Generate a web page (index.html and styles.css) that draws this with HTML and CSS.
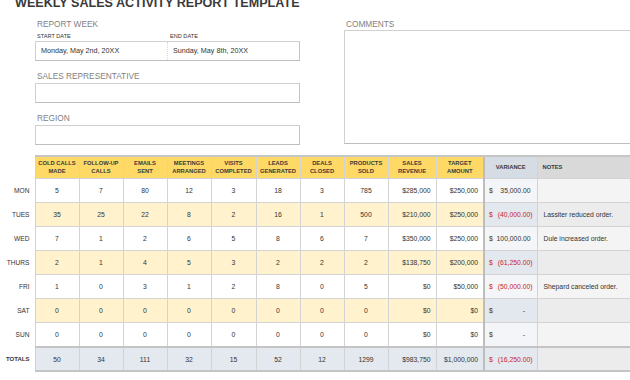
FILE: index.html
```html
<!DOCTYPE html>
<html>
<head>
<meta charset="utf-8">
<link rel="stylesheet" href="styles.css">
</head>
<body>
<h1 class="title">WEEKLY SALES ACTIVITY REPORT TEMPLATE</h1>
<div class="top">
  <div class="left">
    <div class="label">REPORT WEEK</div>
    <div class="sublabels"><span class="sub">START DATE</span><span class="sub">END DATE</span></div>
    <div class="box dates">
      <div class="dcell">Monday, May 2nd, 20XX</div>
      <div class="dcell second">Sunday, May 8th, 20XX</div>
    </div>
    <div class="label spaced">SALES REPRESENTATIVE</div>
    <div class="box"></div>
    <div class="label spaced">REGION</div>
    <div class="box"></div>
  </div>
  <div class="right">
    <div class="label">COMMENTS</div>
    <div class="box comments"></div>
  </div>
</div>
<table class="grid">
  <colgroup>
    <col class="c-day"><col class="c-n"><col class="c-n"><col class="c-n"><col class="c-n"><col class="c-n5"><col class="c-n"><col class="c-n"><col class="c-n"><col class="c-m"><col class="c-m"><col class="c-var"><col class="c-notes">
  </colgroup>
  <thead>
    <tr>
      <th class="day"></th>
      <th class="hy">COLD CALLS<br>MADE</th>
      <th class="hy">FOLLOW-UP<br>CALLS</th>
      <th class="hy">EMAILS<br>SENT</th>
      <th class="hy">MEETINGS<br>ARRANGED</th>
      <th class="hy">VISITS<br>COMPLETED</th>
      <th class="hy">LEADS<br>GENERATED</th>
      <th class="hy">DEALS<br>CLOSED</th>
      <th class="hy">PRODUCTS<br>SOLD</th>
      <th class="hy">SALES<br>REVENUE</th>
      <th class="hy">TARGET<br>AMOUNT</th>
      <th class="hv">VARIANCE</th>
      <th class="hn">NOTES</th>
    </tr>
  </thead>
  <tbody>
    <tr class="odd">
      <td class="day">MON</td><td>5</td><td>7</td><td>80</td><td>12</td><td>3</td><td>18</td><td>3</td><td>785</td><td class="money">$285,000</td><td class="money">$250,000</td>
      <td class="var"><span class="cur">$</span><span class="amt">35,000.00&nbsp;</span></td><td class="note"></td>
    </tr>
    <tr class="even">
      <td class="day">TUES</td><td>35</td><td>25</td><td>22</td><td>8</td><td>2</td><td>16</td><td>1</td><td>500</td><td class="money">$210,000</td><td class="money">$250,000</td>
      <td class="var neg"><span class="cur">$</span><span class="amt">(40,000.00)</span></td><td class="note">Lassiter reduced order.</td>
    </tr>
    <tr class="odd">
      <td class="day">WED</td><td>7</td><td>1</td><td>2</td><td>6</td><td>5</td><td>8</td><td>6</td><td>7</td><td class="money">$350,000</td><td class="money">$250,000</td>
      <td class="var"><span class="cur">$</span><span class="amt">100,000.00&nbsp;</span></td><td class="note">Dule increased order.</td>
    </tr>
    <tr class="even">
      <td class="day">THURS</td><td>2</td><td>1</td><td>4</td><td>5</td><td>3</td><td>2</td><td>2</td><td>2</td><td class="money">$138,750</td><td class="money">$200,000</td>
      <td class="var neg"><span class="cur">$</span><span class="amt">(61,250.00)</span></td><td class="note"></td>
    </tr>
    <tr class="odd">
      <td class="day">FRI</td><td>1</td><td>0</td><td>3</td><td>1</td><td>2</td><td>8</td><td>0</td><td>5</td><td class="money">$0</td><td class="money">$50,000</td>
      <td class="var neg"><span class="cur">$</span><span class="amt">(50,000.00)</span></td><td class="note">Shepard canceled order.</td>
    </tr>
    <tr class="even">
      <td class="day">SAT</td><td>0</td><td>0</td><td>0</td><td>0</td><td>0</td><td>0</td><td>0</td><td>0</td><td class="money">$0</td><td class="money">$0</td>
      <td class="var"><span class="cur">$</span><span class="amt">-&nbsp;&nbsp;&nbsp;&nbsp;</span></td><td class="note"></td>
    </tr>
    <tr class="odd">
      <td class="day">SUN</td><td>0</td><td>0</td><td>0</td><td>0</td><td>0</td><td>0</td><td>0</td><td>0</td><td class="money">$0</td><td class="money">$0</td>
      <td class="var"><span class="cur">$</span><span class="amt">-&nbsp;&nbsp;&nbsp;&nbsp;</span></td><td class="note"></td>
    </tr>
    <tr class="totals">
      <td class="day">TOTALS</td><td>50</td><td>34</td><td>111</td><td>32</td><td>15</td><td>52</td><td>12</td><td>1299</td><td class="money">$983,750</td><td class="money">$1,000,000</td>
      <td class="var neg"><span class="cur">$</span><span class="amt">(16,250.00)</span></td><td class="note"></td>
    </tr>
  </tbody>
</table>
</body>
</html>
```

FILE: styles.css
```css
html, body {
  margin: 0;
  padding: 0;
  background: #ffffff;
  overflow: hidden;
}
body {
  width: 630px;
  height: 380px;
  font-family: "Liberation Sans", Arial, sans-serif;
  color: #333333;
}
.title {
  margin: -4px 0 0 15px;
  font-size: 12.6px;
  line-height: 14px;
  font-weight: bold;
  color: #3a3a3a;
  white-space: nowrap;
}
.top {
  display: flex;
  gap: 44px;
  padding: 9px 0 0 35px;
}
.left {
  width: 265px;
  flex: none;
  display: flex;
  flex-direction: column;
}
.right {
  width: 300px;
  flex: none;
  display: flex;
  flex-direction: column;
}
.label {
  font-size: 8.3px;
  line-height: 11px;
  color: #7f7f7f;
  padding-left: 2px;
  white-space: nowrap;
}
.label.spaced {
  margin-top: 10px;
  margin-bottom: 1px;
}
.sublabels {
  display: flex;
  height: 11px;
  align-items: center;
}
.sub {
  font-size: 5.6px;
  line-height: 8px;
  color: #333;
  padding-left: 2px;
}
.sub:first-child {
  width: 131px;
}
.box {
  height: 18px;
  border: 1px solid #d0d0d0;
  border-bottom-color: #bdbdbd;
  border-right-color: #c4c4c4;
  background: #fff;
}
.dates {
  display: flex;
}
.dcell {
  width: 131px;
  font-size: 7.2px;
  line-height: 18px;
  padding-left: 5px;
  color: #333;
  box-sizing: border-box;
}
.dcell.second {
  flex: 1;
  border-left: 1px dotted #d8d8d8;
}
.comments {
  height: 112px;
  border-right: none;
}

/* table */
.grid {
  margin-top: 10px;
  border-collapse: collapse;
  table-layout: fixed;
  width: 637px;
  font-size: 6.8px;
  color: #333;
}
.c-day { width: 35px; }
.c-n { width: 44px; }
.c-n5 { width: 45px; }
.c-m { width: 48px; }
.c-var { width: 53px; }
.c-notes { width: 100px; }

.grid th, .grid td {
  border: 1px solid #d3d3d3;
  padding: 0;
  text-align: center;
  overflow: hidden;
  white-space: nowrap;
}
.grid th {
  height: 21px;
  font-size: 5.8px;
  line-height: 7.5px;
  font-weight: bold;
  color: #3a3a3a;
  border-top: 2px solid #c6c6c6;
}
.grid td {
  height: 23px;
}
.grid .day {
  border: none;
  background: transparent;
  text-align: right;
  padding-right: 5px;
  font-size: 6.6px;
}
.grid th.day { border-top: none; }
.hy { background: #ffd966; }
.hv {
  background: #d6dce4;
  border-left: 2px solid #bdbdbd !important;
}
.grid th.hn {
  background: #d9d9d9;
  text-align: left;
  padding-left: 5px;
}
.odd td { background: #ffffff; }
.even td { background: #fff2cc; }
.grid td.day { background: transparent; }
.grid td.money {
  text-align: right;
  padding-right: 5px;
}
.grid td.var {
  border-left: 2px solid #bdbdbd;
  padding: 0 4px 0 4px;
}
.odd td.var { background: #f4f5f8; }
.even td.var { background: #e3e7ee; }
.var .cur { float: left; }
.var .amt { float: right; }
.var.neg { color: #c8262c; }
.grid td.note {
  text-align: left;
  padding-left: 6px;
}
.odd td.note { background: #f4f4f4; }
.even td.note { background: #ececec; }
.totals td {
  background: #e4e8ef;
  border-top: 2px solid #c4c4c4;
  border-bottom: 2px solid #c4c4c4;
  height: 22px;
}
.grid .totals td.day {
  font-weight: bold;
  font-size: 6px;
  border: none;
  background: transparent;
}
.totals td.note { background: #ececec; }
.totals td.var { background: #e4e8ef; }
```
